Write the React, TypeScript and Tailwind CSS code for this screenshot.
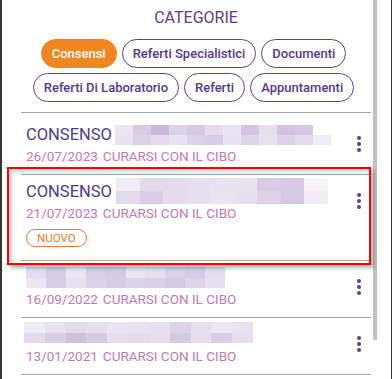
import React from "react";

type Blur = {
  x: number;
  y: number;
  w: number;
  h: number;
  top: string[];
  bottom: string[];
};

type Item = {
  title?: boolean;
  date: string;
  nuovo?: boolean;
  blur: Blur;
};

const items: Item[] = [
  {
    title: true,
    date: "26/07/2023",
    blur: {
      x: 3,
      y: 0,
      w: 216,
      h: 20,
      top: ["#ece6f2", "#d8cce4", "#cbb9d9", "#ddd3e8", "#d6cae3", "#e4dcec", "#ebe5f1", "#d4c6e0", "#e6dfee", "#d2c3df", "#d5c8e2", "#ffffff"],
      bottom: ["#e9e3f0", "#ddd2e8", "#e4dced", "#e8e1ef", "#ddd3e8", "#d9cde5", "#e9e2f0", "#dfd5e9", "#e7e0ef", "#ddd3e8", "#e2d9eb", "#f0ecf5"],
    },
  },
  {
    title: true,
    date: "21/07/2023",
    nuovo: true,
    blur: {
      x: 4,
      y: -4,
      w: 212,
      h: 26,
      top: ["#f0ecf5", "#e2d9eb", "#e3dbec", "#e6dfee", "#e8e1ef", "#e9e3f0", "#d7cbe3", "#d6cae3", "#f7f5fa"],
      bottom: ["#e3dbec", "#d9cee6", "#e3dbec", "#e6dfee", "#ebe5f1", "#e6dfee", "#ddd3e8", "#d6cae3", "#efebf4"],
    },
  },
  {
    date: "16/09/2022",
    blur: {
      x: 0,
      y: -1,
      w: 199,
      h: 21,
      top: ["#e5dded", "#d9cde6", "#ece6f2", "#d9cee6", "#d7cbe3", "#ebe5f1", "#e6dfee", "#dcd1e7", "#d8cce4", "#e5dded"],
      bottom: ["#ece6f2", "#d9cee6", "#e8e1ef", "#ddd3e8", "#d8cce4", "#ddd3e8", "#dcd1e7", "#d7cbe3", "#dfd5e9", "#e6dfee"],
    },
  },
  {
    date: "13/01/2021",
    blur: {
      x: -2,
      y: -3,
      w: 229,
      h: 21,
      top: ["#efebf4", "#e8e1ef", "#e3dbec", "#e6dfee", "#ebe5f1", "#e9e3f0", "#e6dfee", "#ddd3e8", "#e6dfee", "#ece6f2", "#e8e1ef"],
      bottom: ["#e3dbec", "#d9cee6", "#cfc1dd", "#d7cbe3", "#e6dfee", "#e3dbec", "#e6dfee", "#d6cae3", "#e6dfee", "#d9cee6", "#e6dfee"],
    },
  },
];

const chips = [
  "Consensi",
  "Referti Specialistici",
  "Documenti",
  "Referti Di Laboratorio",
  "Referti",
  "Appuntamenti",
];

function Mosaic({ b }: { b: Blur }) {
  return (
    <div
      className="flex flex-col shrink-0"
      style={{ marginLeft: b.x, marginTop: b.y, width: b.w, height: b.h }}
    >
      {[b.top, b.bottom].map((row, ri) => (
        <div key={ri} className="flex flex-1">
          {row.map((c, ci) => (
            <div key={ci} className="flex-1" style={{ backgroundColor: c }} />
          ))}
        </div>
      ))}
    </div>
  );
}

function Dots() {
  return (
    <svg width="4" height="16" viewBox="0 0 4 16" className="mt-[18px] mr-[10px] shrink-0">
      <circle cx="2" cy="2" r="2" fill="#5a3f99" />
      <circle cx="2" cy="8" r="2" fill="#5a3f99" />
      <circle cx="2" cy="14" r="2" fill="#5a3f99" />
    </svg>
  );
}

export default function App() {
  return (
    <div
      className="relative w-[392px] h-[379px] bg-white flex border-l-2 border-r border-[#333333] overflow-hidden"
      style={{ fontFamily: "Roboto, 'Liberation Sans', sans-serif" }}
    >
      <div className="w-[371px] pl-[19px] pr-[2px] shrink-0">
        <div className="w-[350px]">
          <div className="pt-[8px] h-[28px] text-center text-[16px] leading-[20px] text-[#5a3e91]">
            CATEGORIE
          </div>
          <div className="mt-[11px] flex flex-wrap justify-center gap-y-[5px]">
            {chips.map((c, i) => (
              <div
                key={c}
                className={
                  i === 0
                    ? "mr-[5px] h-[29px] px-[10px] rounded-full border border-[#f0861f] bg-[#f0861f] text-white text-[13px] font-medium flex items-center"
                    : "mr-[5px] h-[29px] px-[10px] rounded-full border border-[#5f3d95] text-[#56398c] text-[13px] font-medium flex items-center"
                }
              >
                {c}
              </div>
            ))}
          </div>
          <div className="mt-[10px] h-px bg-[#a3a3a3]" />
          <div className="mt-[5px]">
            {items.map((it, idx) => (
              <div key={idx} className="flex items-start border-b border-[#a3a3a3]">
                <div className="flex-1 pl-[5px] pt-[7px] pb-[7px]">
                  <div className="flex items-start h-[20px]">
                    {it.title && (
                      <span className="text-[16.5px] leading-[20px] text-[#4b3b8f]">CONSENSO</span>
                    )}
                    <Mosaic b={it.blur} />
                  </div>
                  <div className="text-[13.5px] leading-[22px] text-[#c27ab2] whitespace-nowrap">
                    <span className="mr-[5px]">{it.date}</span>
                    <span>CURARSI CON IL CIBO</span>
                  </div>
                  {it.nuovo && (
                    <div className="mt-[5px] mb-[6px] inline-flex items-center h-[18px] px-[10px] rounded-full border border-[#ee7a22] text-[#ee7a22] text-[11.5px] leading-[16px]">
                      NUOVO
                    </div>
                  )}
                </div>
                <Dots />
              </div>
            ))}
          </div>
        </div>
      </div>
      <div className="w-[4px] shrink-0">
        <div className="h-[340px] bg-[#c1c1c1]" />
      </div>
      <div className="flex-1" />
      <div className="absolute left-[5px] top-[167px] w-[364px] h-[98px] border-2 border-[#ff0000] shadow-[3px_3px_4px_rgba(0,0,0,0.3),inset_3px_3px_4px_rgba(0,0,0,0.18)] pointer-events-none" />
    </div>
  );
}
